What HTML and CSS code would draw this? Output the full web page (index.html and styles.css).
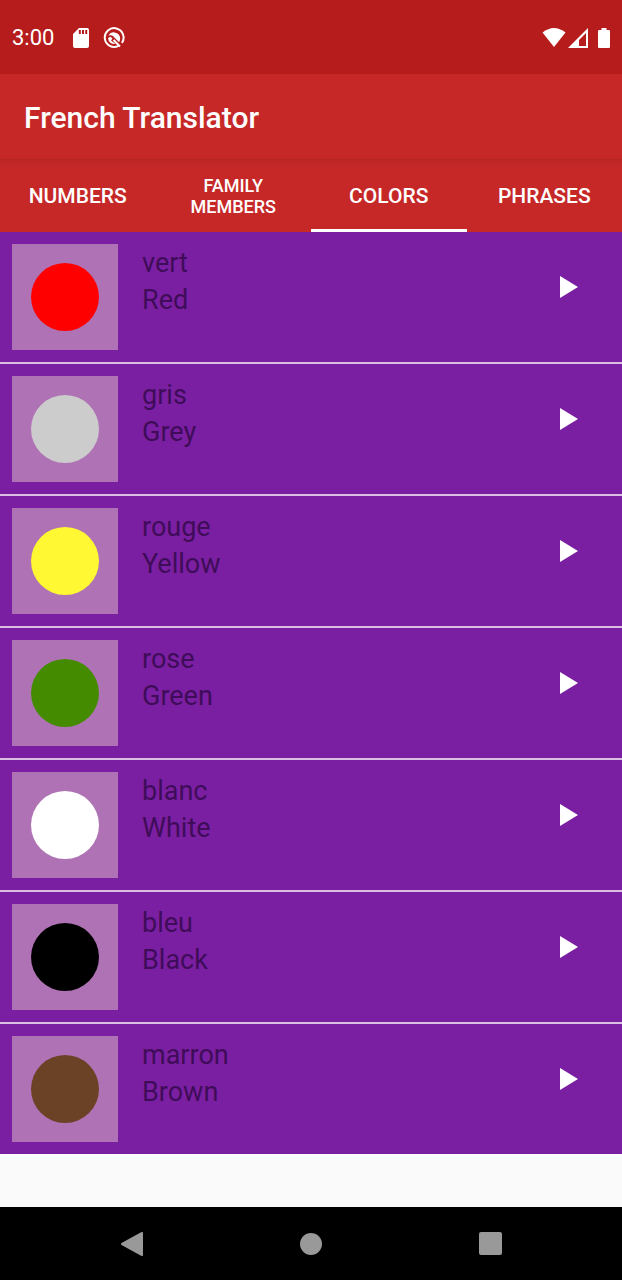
FILE: index.html
```html
<!DOCTYPE html>
<html lang="en">
<head>
<meta charset="utf-8">
<meta name="viewport" content="width=device-width, initial-scale=1">
<title>French Translator</title>
<link rel="stylesheet" href="styles.css">
</head>
<body>
<div class="screen">
  <div class="status-bar">
    <span class="clock">3:00</span>
    <svg class="sd-icon" width="16" height="20" viewBox="0 0 16 20" aria-hidden="true">
      <path fill="#fff" fill-rule="evenodd" d="M6 0H14Q16 0 16 2V18Q16 20 14 20H2Q0 20 0 18V6ZM5.800 2V6H7.800V2ZM9 2V6H11V2ZM12.200 2V6H14.200V2Z"/>
    </svg>
    <svg width="22" height="22" viewBox="0 0 22 22" aria-hidden="true">
      <path fill="none" stroke="#fff" stroke-width="2" d="M15.500 18.900A9.400 9.400 0 1 1 18.900 15.900"/>
      <path fill="#fff" d="M5.500 8.500A6.300 6.300 0 0 1 17.200 11.500Q17.200 13.500 16 15.200L10.500 9.500Q8.500 7.500 5.500 8.500Z"/>
      <path fill="#fff" d="M5 11L7.500 9.800L9.500 11.500L8 13.500L12.500 17Q6 17.500 5 11Z"/>
      <path fill="none" stroke="#fff" stroke-width="2" d="M10.500 13L17 19.500"/>
    </svg>
    <div class="system-icons">
      <svg width="24" height="20" viewBox="0 0 24 20" aria-hidden="true"><path fill="#fff" d="M0.500 4.500Q12-4.500 23.500 4.500L12 19Z"/></svg>
      <svg width="20" height="20" viewBox="0 0 20 20" aria-hidden="true"><path fill="#fff" fill-rule="evenodd" d="M0 20L20 0V20ZM11 18H18V5L11 12Z"/></svg>
      <svg class="battery-icon" width="12" height="20" viewBox="0 0 12 20" aria-hidden="true"><path fill="#fff" d="M3.500 0H8.500V2H11Q12 2 12 3V19Q12 20 11 20H1Q0 20 0 19V3Q0 2 1 2H3.500Z"/></svg>
    </div>
  </div>
  <header class="app-bar"><h1 class="app-title">French Translator</h1></header>
  <nav class="tabs" role="tablist">
    <button class="tab" role="tab">NUMBERS</button>
    <button class="tab tab-small" role="tab">FAMILY<br>MEMBERS</button>
    <button class="tab tab-active" role="tab" aria-selected="true">COLORS</button>
    <button class="tab" role="tab">PHRASES</button>
  </nav>
  <main class="content">
    <ul class="words">
      <li class="word"><div class="thumb"><span class="swatch red"></span></div><div class="labels"><span>vert</span><span>Red</span></div><button class="play" aria-label="Play vert"><svg width="18" height="22" viewBox="0 0 18 22"><path fill="#fff" d="M0 0L18 11L0 22Z"/></svg></button></li>
      <li class="word"><div class="thumb"><span class="swatch grey"></span></div><div class="labels"><span>gris</span><span>Grey</span></div><button class="play" aria-label="Play gris"><svg width="18" height="22" viewBox="0 0 18 22"><path fill="#fff" d="M0 0L18 11L0 22Z"/></svg></button></li>
      <li class="word"><div class="thumb"><span class="swatch yellow"></span></div><div class="labels"><span>rouge</span><span>Yellow</span></div><button class="play" aria-label="Play rouge"><svg width="18" height="22" viewBox="0 0 18 22"><path fill="#fff" d="M0 0L18 11L0 22Z"/></svg></button></li>
      <li class="word"><div class="thumb"><span class="swatch green"></span></div><div class="labels"><span>rose</span><span>Green</span></div><button class="play" aria-label="Play rose"><svg width="18" height="22" viewBox="0 0 18 22"><path fill="#fff" d="M0 0L18 11L0 22Z"/></svg></button></li>
      <li class="word"><div class="thumb"><span class="swatch white"></span></div><div class="labels"><span>blanc</span><span>White</span></div><button class="play" aria-label="Play blanc"><svg width="18" height="22" viewBox="0 0 18 22"><path fill="#fff" d="M0 0L18 11L0 22Z"/></svg></button></li>
      <li class="word"><div class="thumb"><span class="swatch black"></span></div><div class="labels"><span>bleu</span><span>Black</span></div><button class="play" aria-label="Play bleu"><svg width="18" height="22" viewBox="0 0 18 22"><path fill="#fff" d="M0 0L18 11L0 22Z"/></svg></button></li>
      <li class="word"><div class="thumb"><span class="swatch brown"></span></div><div class="labels"><span>marron</span><span>Brown</span></div><button class="play" aria-label="Play marron"><svg width="18" height="22" viewBox="0 0 18 22"><path fill="#fff" d="M0 0L18 11L0 22Z"/></svg></button></li>
    </ul>
  </main>
  <footer class="nav-bar">
    <button class="nav-button" aria-label="Back"><svg width="22" height="26" viewBox="0 0 22 26"><path fill="#999" stroke="#999" stroke-width="2" stroke-linejoin="round" d="M1 13L21 2V24Z"/></svg></button>
    <button class="nav-button" aria-label="Home"><svg width="22" height="22" viewBox="0 0 22 22"><circle cx="11" cy="11" r="11" fill="#999"/></svg></button>
    <button class="nav-button" aria-label="Recent apps"><svg width="23" height="23" viewBox="0 0 23 23"><rect width="23" height="23" rx="2" fill="#999"/></svg></button>
  </footer>
</div>
</body>
</html>
```
FILE: styles.css
```css
* { box-sizing: border-box; }

body {
  margin: 0;
  font-family: Roboto, "Liberation Sans", sans-serif;
  background: #fafafa;
}

button {
  border: 0;
  padding: 0;
  background: none;
  color: inherit;
  font: inherit;
}

svg { display: block; }

.screen {
  display: flex;
  flex-direction: column;
  min-height: 100vh;
}

.status-bar {
  display: flex;
  align-items: center;
  height: 74px;
  padding: 2px 12px 0;
  background: #b71c1c;
  color: #fff;
}

.clock { font-size: 22px; line-height: 26px; }
.sd-icon { margin: 0 14px 0 19px; }

.system-icons {
  display: flex;
  gap: 2px;
  margin-left: auto;
}

.battery-icon { margin-left: 8px; }

.app-bar {
  display: flex;
  align-items: center;
  height: 85px;
  padding: 2px 24px 0;
  background: #c62828;
  color: #fff;
}

.app-title {
  margin: 0;
  font-size: 30px;
  line-height: 36px;
  font-weight: 500;
}

.tabs {
  display: grid;
  grid-template-columns: repeat(4, 1fr);
  height: 73px;
  background: linear-gradient(#b52424, #c02727 3px, #c62828 9px);
  color: #fff;
}

.tab {
  padding-top: 4px;
  border-bottom: 3px solid transparent;
  font-size: 21px;
  line-height: 24px;
  font-weight: 500;
}

.tab-small { font-size: 18px; line-height: 21px; }
.tab-active { border-bottom-color: #fff; }

.content { flex: 1; }

.words {
  margin: 0;
  padding: 0;
  list-style: none;
}

.word {
  display: flex;
  gap: 24px;
  padding: 12px;
  background: #7b1fa2;
}

.word + .word { border-top: 2px solid #d8bfe3; }

.thumb {
  display: grid;
  place-items: center;
  width: 106px;
  height: 106px;
  background: #ae72b5;
}

.swatch {
  width: 68px;
  height: 68px;
  border-radius: 50%;
}

.red { background: #ff0000; }
.grey { background: #cccccc; }
.yellow { background: #fff833; }
.green { background: #458b00; }
.white { background: #ffffff; }
.black { background: #000000; }
.brown { background: #6b4226; }

.labels {
  display: flex;
  flex: 1;
  flex-direction: column;
  padding-top: 1px;
  color: #3f0c59;
  font-size: 27px;
  line-height: 37px;
}

.play {
  display: grid;
  place-items: center;
  width: 60px;
  height: 86px;
  margin-right: 11px;
}

.nav-bar {
  display: flex;
  justify-content: center;
  gap: 119px;
  height: 73px;
  background: #000;
}

.nav-button {
  display: grid;
  place-items: center;
  width: 60px;
}
```
